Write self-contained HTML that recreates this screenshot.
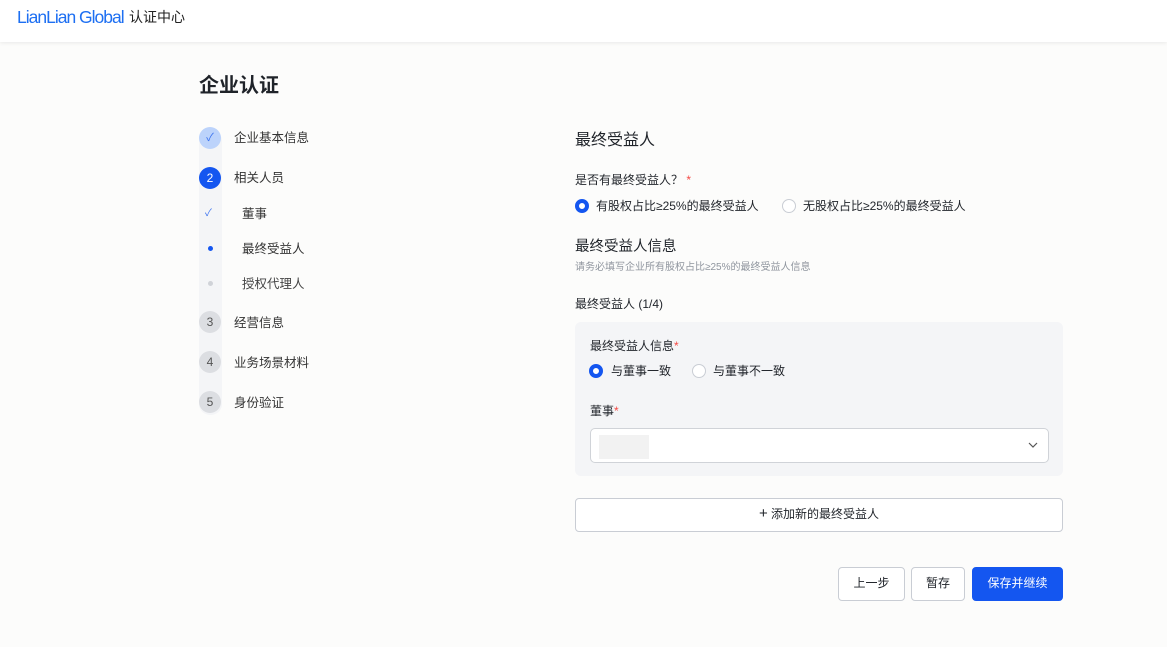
<!DOCTYPE html>
<html><head><meta charset="utf-8"><style>
*{box-sizing:border-box;margin:0;padding:0}
body{width:1167px;height:647px;background:#fcfcfb;font-family:"Liberation Sans","Noto Sans CJK SC",sans-serif;color:#1f2329;position:relative;overflow:hidden}
.a{position:absolute;white-space:nowrap}
.hdr{position:absolute;left:0;top:0;width:1167px;height:42px;background:#fff;box-shadow:0 1px 4px rgba(0,0,0,.08)}
.c{position:absolute;width:22px;height:22px;border-radius:50%;left:199px;font-size:12px;text-align:center;line-height:22px}
.g{background:#dcdee2;color:#555}
.st{font-size:12.5px;color:#333;left:234px}
.sub{font-size:12.5px;color:#333;left:242px}
.rad{position:absolute;width:14px;height:14px;border-radius:50%;border:1px solid #c9cdd4;background:#fff}
.rad.on{border:4px solid #1456f0}
.lbl{font-size:12px;color:#1f2329}
.req{color:#f54a45}
.btn{position:absolute;height:34px;border:1px solid #c9cdd4;border-radius:4px;background:#fff;font-size:12px;text-align:center;line-height:32px}
</style></head><body>
<div class="hdr">
<div class="a" style="left:17px;top:7px;font-size:17.5px;color:#1d6ff2;letter-spacing:-1px">LianLian Global</div>
<div class="a" style="left:129px;top:7px;font-size:14px;color:#222">认证中心</div>
</div>
<div class="a" style="left:199px;top:69px;font-size:20px;font-weight:bold;color:#1f2329">企业认证</div>
<div style="position:absolute;left:199px;top:130px;width:23px;height:285px;background:#f4f5f7;border-radius:11px"></div>
<div class="c" style="top:127px;background:#bcd3fb;color:#3c73ef;font-size:11px">✓</div>
<div class="a st" style="top:127px">企业基本信息</div>
<div class="c" style="top:167px;background:#1456f0;color:#fff">2</div>
<div class="a st" style="top:167px">相关人员</div>
<div class="a" style="left:205px;top:204px;font-size:10px;color:#3c73ef">✓</div>
<div class="a sub" style="top:203px">董事</div>
<div style="position:absolute;left:208px;top:246px;width:5px;height:5px;border-radius:50%;background:#1456f0"></div>
<div class="a sub" style="top:238px">最终受益人</div>
<div style="position:absolute;left:208px;top:281px;width:5px;height:5px;border-radius:50%;background:#d0d3d8"></div>
<div class="a sub" style="top:273px;color:#444">授权代理人</div>
<div class="c g" style="top:311px">3</div><div class="a st" style="top:312px">经营信息</div>
<div class="c g" style="top:351px">4</div><div class="a st" style="top:352px">业务场景材料</div>
<div class="c g" style="top:391px">5</div><div class="a st" style="top:392px">身份验证</div>

<div class="a" style="left:575px;top:126px;font-size:16px">最终受益人</div>
<div class="a lbl" style="left:575px;top:171px">是否有最终受益人？ <span class="req">*</span></div>
<div class="rad on" style="left:575px;top:199px"></div>
<div class="a lbl" style="left:596px;top:197px">有股权占比≥25%的最终受益人</div>
<div class="rad" style="left:782px;top:199px"></div>
<div class="a lbl" style="left:803px;top:197px">无股权占比≥25%的最终受益人</div>
<div class="a" style="left:575px;top:235px;font-size:14.5px">最终受益人信息</div>
<div class="a" style="left:575px;top:258px;font-size:10px;color:#8f959e">请务必填写企业所有股权占比≥25%的最终受益人信息</div>
<div class="a lbl" style="left:575px;top:295px">最终受益人 (1/4)</div>
<div style="position:absolute;left:575px;top:322px;width:488px;height:154px;background:#f4f5f7;border-radius:6px"></div>
<div class="a lbl" style="left:590px;top:337px">最终受益人信息<span class="req">*</span></div>
<div class="rad on" style="left:589px;top:364px"></div>
<div class="a lbl" style="left:611px;top:362px">与董事一致</div>
<div class="rad" style="left:692px;top:364px"></div>
<div class="a lbl" style="left:713px;top:362px">与董事不一致</div>
<div class="a lbl" style="left:590px;top:402px">董事<span class="req">*</span></div>
<div style="position:absolute;left:590px;top:428px;width:459px;height:35px;background:#fff;border:1px solid #d0d3d8;border-radius:5px">
<div style="position:absolute;left:8px;top:6px;width:50px;height:24px;background:#f2f2f2"></div>
<svg style="position:absolute;right:10px;top:12px" width="10" height="8" viewBox="0 0 10 8"><path d="M1 2l4 4 4-4" fill="none" stroke="#555" stroke-width="1.2"/></svg>
</div>
<div class="btn" style="left:575px;top:498px;width:488px;color:#1f2329;line-height:30px"><span style="font-size:15px">+</span> 添加新的最终受益人</div>
<div class="btn" style="left:838px;top:567px;width:67px;line-height:30px">上一步</div>
<div class="btn" style="left:911px;top:567px;width:54px;line-height:30px">暂存</div>
<div class="btn" style="left:972px;top:567px;width:91px;background:#1456f0;border-color:#1456f0;color:#fff;line-height:30px">保存并继续</div>
</body></html>
